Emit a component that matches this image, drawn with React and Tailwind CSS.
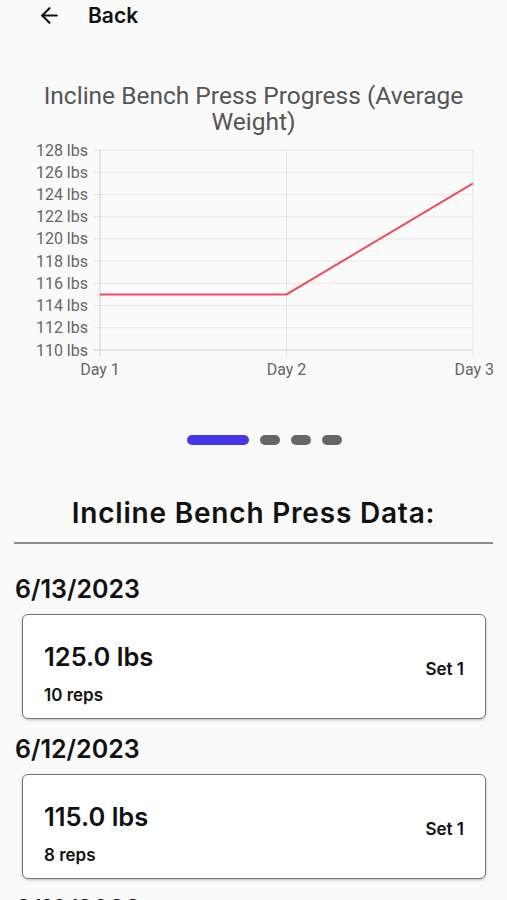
import { ArrowLeft } from "lucide-react";

const days = ["Day 1", "Day 2", "Day 3"];
const ticks = [128, 126, 124, 122, 120, 118, 116, 114, 112, 110];
const points = [115, 115, 125];

const entries = [
  { date: "6/13/2023", weight: "125.0 lbs", reps: "10 reps", set: "Set 1" },
  { date: "6/12/2023", weight: "115.0 lbs", reps: "8 reps", set: "Set 1" },
  { date: "6/10/2023", weight: "115.0 lbs", reps: "8 reps", set: "Set 1" },
];

// chart geometry (svg coords)
const left = 100;
const right = 473;
const top = 9;
const bottom = 209;
const xAt = (i) => left + (i * (right - left)) / 2;
const yAt = (v) => bottom - ((v - 110) / 18) * (bottom - top);

const ProgressChart = () => (
  <svg width="507" height="245" className="block mt-[6px]" style={{ fontFamily: "Roboto, sans-serif" }}>
    {ticks.map((t) => (
      <g key={t}>
        <line x1={left - 6} x2={right} y1={yAt(t)} y2={yAt(t)} stroke={t === 110 ? "#cfcfcf" : "#e6e6e6"} strokeWidth="1" />
        <text x={left - 12} y={yAt(t) + 5.5} textAnchor="end" fontSize="16" fill="#666">
          {t} lbs
        </text>
      </g>
    ))}
    {days.map((d, i) => (
      <g key={d}>
        <line x1={xAt(i)} x2={xAt(i)} y1={top} y2={bottom + 6} stroke={i === 0 ? "#cfcfcf" : "#e6e6e6"} strokeWidth="1" />
        <text x={i === 2 ? 494 : xAt(i)} y={bottom + 25} textAnchor={i === 2 ? "end" : "middle"} fontSize="16" fill="#666">
          {d}
        </text>
      </g>
    ))}
    <polyline
      points={points.map((p, i) => `${xAt(i)},${yAt(p)}`).join(" ")}
      fill="none"
      stroke="#ef4c62"
      strokeWidth="2"
    />
  </svg>
);

export default function App() {
  return (
    <div className="min-h-screen bg-[#fafafa] w-[507px] overflow-hidden" style={{ fontFamily: "Inter, sans-serif" }}>
      <div className="flex items-center h-[31px] pl-[37px] gap-[26px]">
        <ArrowLeft size={25} strokeWidth={2} className="text-[#111]" />
        <span className="text-[21px] font-semibold text-[#111]">Back</span>
      </div>

      <div className="mt-[52px] text-center text-[24.5px] leading-[26px] text-[#555] px-4" style={{ fontFamily: "Roboto, sans-serif" }}>
        Incline Bench Press Progress (Average Weight)
      </div>
      <ProgressChart />

      <div className="flex justify-center gap-[11px] mt-[49px] pl-[21px]">
        <div className="w-[62px] h-[10px] rounded-full bg-[#4436e8]" />
        <div className="w-[20px] h-[10px] rounded-full bg-[#666]" />
        <div className="w-[20px] h-[10px] rounded-full bg-[#666]" />
        <div className="w-[20px] h-[10px] rounded-full bg-[#666]" />
      </div>

      <h2 className="mt-[50px] text-center text-[28px] tracking-[0.8px] font-semibold text-[#111] leading-[36px]">Incline Bench Press Data:</h2>
      <div className="mx-[14px] mt-[11px] h-[2px] bg-[#8a8a8a]" />

      <div className="pl-[15px] pr-[21px] pt-[30px]">
        {entries.map((e) => (
          <div key={e.date}>
            <div className="text-[25px] font-semibold text-[#111] leading-[30px]">{e.date}</div>
            <div className="ml-[7px] mt-[10px] mb-[15px] h-[105px] bg-white border border-[#777] rounded-[6px] shadow-[0_1px_3px_rgba(0,0,0,0.25)] flex items-center justify-between pl-[21px] pr-[21px]">
              <div className="flex flex-col pt-[14px]">
                <span className="text-[25.5px] font-semibold text-[#111] leading-[30px]">{e.weight}</span>
                <span className="mt-[13px] text-[17px] font-semibold text-[#111] leading-[20px]">{e.reps}</span>
              </div>
              <span className="text-[17px] font-semibold text-[#111] pt-[6px]">{e.set}</span>
            </div>
          </div>
        ))}
      </div>
    </div>
  );
}
